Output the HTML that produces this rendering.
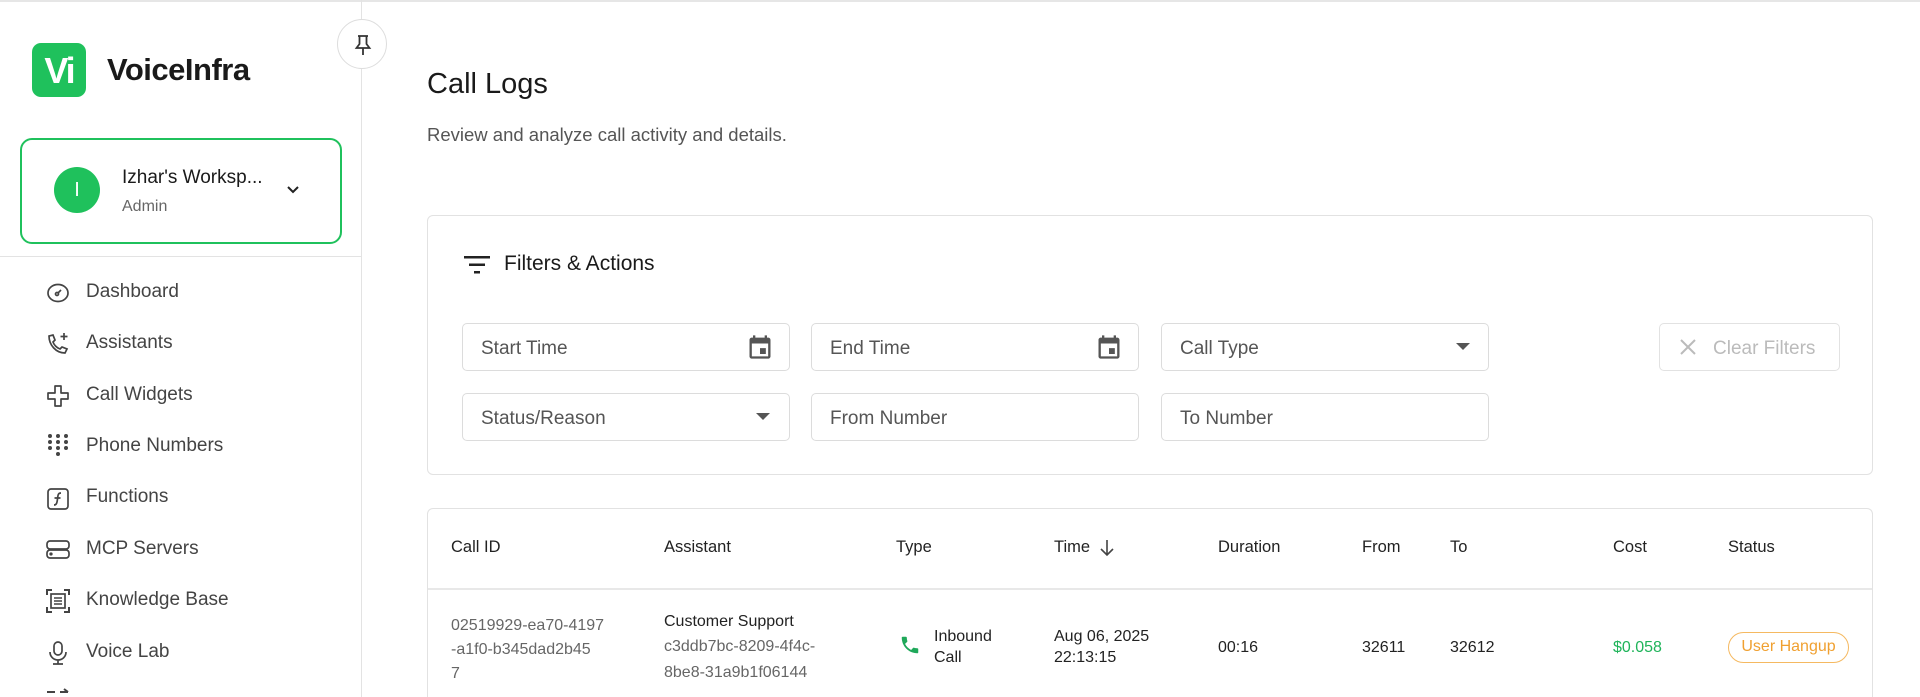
<!DOCTYPE html>
<html><head><meta charset="utf-8"><style>
*{box-sizing:border-box;margin:0;padding:0}
html,body{width:1920px;height:697px;overflow:hidden}
body{background:#fff;font-family:"Liberation Sans",sans-serif;color:#1a1a1a;position:relative}
.a{position:absolute}
.topline{left:0;top:0;width:1920px;height:2px;background:#e6e6e6}
.side{left:0;top:0;width:362px;height:697px;border-right:1px solid #e3e3e3}
.logo{left:32px;top:43px;width:54px;height:54px;background:#1fc15c;border-radius:9px;color:#fff;font-weight:700;font-size:36px;text-align:center;line-height:56px;letter-spacing:-2px}
.brand{left:107px;top:52px;font-size:31px;font-weight:700;letter-spacing:-0.5px}
.pin{left:337px;top:19px;width:50px;height:50px;border:1px solid #ddd;border-radius:50%;background:#fff}
.ws{left:20px;top:138px;width:322px;height:106px;border:2.5px solid #1fc15c;border-radius:12px}
.av{left:54px;top:167px;width:46px;height:46px;border-radius:50%;background:#1fc15c;color:#fff;text-align:center;line-height:46px;font-size:20px}
.nav{left:86px;font-size:19px;color:#444}
.ic{left:44px;width:28px;height:28px}
.card{border:1.5px solid #e2e2e2;border-radius:6px;background:#fff}
.inp{height:48px;border:1.5px solid #dcdcdc;border-radius:5px;font-size:19px;color:#555;padding:14px 18px}
.th{top:538px;font-size:16.5px;color:#222}
.td{font-size:16px;color:#333;line-height:24px}
</style></head><body>
<div class="a topline"></div>
<div class="a side"></div>
<div class="a logo">Vi</div>
<div class="a brand">VoiceInfra</div>
<div class="a pin"><svg width="50" height="50" viewBox="0 0 50 50" fill="none" stroke="#333" stroke-width="1.8"><path d="M20 16h10M21.5 16v8l-3 4h13l-3-4v-8M25 28v7"/></svg></div>
<div class="a ws"></div>
<div class="a av">I</div>
<div class="a" style="left:122px;top:167px;font-size:19px;font-weight:500">Izhar's Worksp...</div>
<div class="a" style="left:122px;top:198px;font-size:16px;color:#666">Admin</div>
<svg class="a" style="left:284px;top:183px" width="18" height="14" viewBox="0 0 18 14"><path d="M4 4l5 5 5-5" stroke="#222" stroke-width="2" fill="none"/></svg>
<div class="a" style="left:0;top:256px;width:362px;height:1px;background:#e3e3e3"></div>

<svg class="a ic" style="top:279px" viewBox="0 0 28 28" fill="none" stroke="#444" stroke-width="1.7"><ellipse cx="14" cy="14" rx="10" ry="8.5"/><circle cx="13" cy="15" r="1.5"/><path d="M14 14l3-3"/></svg>
<div class="a nav" style="top:281px">Dashboard</div>
<svg class="a ic" style="top:330px" viewBox="0 0 28 28" fill="none" stroke="#444" stroke-width="1.7"><path d="M5 6c0 9 7 17 16 17l2-4-5-2-2 2c-3-1-6-4-7-7l2-2-2-5z"/><path d="M20 3v7M16.5 6.5h7"/></svg>
<div class="a nav" style="top:332px">Assistants</div>
<svg class="a ic" style="top:382px" viewBox="0 0 28 28" fill="none" stroke="#444" stroke-width="1.7"><path d="M11 4h6v7h7v6h-7v7h-6v-7H4v-6h7z" stroke-linejoin="round"/></svg>
<div class="a nav" style="top:384px">Call Widgets</div>
<svg class="a ic" style="top:431px" viewBox="0 0 28 28" fill="#444"><circle cx="6" cy="5" r="2"/><circle cx="14" cy="5" r="2"/><circle cx="22" cy="5" r="2"/><circle cx="6" cy="11" r="2"/><circle cx="14" cy="11" r="2"/><circle cx="22" cy="11" r="2"/><circle cx="6" cy="17" r="2"/><circle cx="14" cy="17" r="2"/><circle cx="22" cy="17" r="2"/><circle cx="14" cy="23" r="2"/></svg>
<div class="a nav" style="top:435px">Phone Numbers</div>
<svg class="a ic" style="top:485px" viewBox="0 0 28 28" fill="none" stroke="#444" stroke-width="1.7"><rect x="4" y="4" width="20" height="20" rx="3"/><path d="M17 8c-3 0-3 2-3.5 6s-1 6-3.5 6M10.5 13h6"/></svg>
<div class="a nav" style="top:486px">Functions</div>
<svg class="a ic" style="top:536px" viewBox="0 0 28 28" fill="none" stroke="#444" stroke-width="1.7"><rect x="3" y="5" width="22" height="8" rx="3"/><rect x="3" y="14" width="22" height="8" rx="3"/><circle cx="7" cy="18" r=".8" fill="#444"/></svg>
<div class="a nav" style="top:538px">MCP Servers</div>
<svg class="a ic" style="top:587px" viewBox="0 0 28 28" fill="none" stroke="#444" stroke-width="2"><path d="M3 8V3h5M20 3h5v5M25 20v5h-5M8 25H3v-5"/><rect x="7" y="7" width="14" height="14" stroke-width="1.7"/><path d="M10 11h8M10 14h8M10 17h8" stroke-width="1.5"/></svg>
<div class="a nav" style="top:589px">Knowledge Base</div>
<svg class="a ic" style="top:639px" viewBox="0 0 28 28" fill="none" stroke="#444" stroke-width="1.7"><rect x="10" y="3" width="8" height="13" rx="4"/><path d="M6 13c0 5 4 8 8 8s8-3 8-8M14 21v4M9 25h10"/></svg>
<div class="a nav" style="top:641px">Voice Lab</div>
<svg class="a" style="left:44px;top:688px" width="28" height="9" viewBox="0 0 28 9" fill="none" stroke="#444" stroke-width="2"><path d="M3 4h8M16 4h8M20 1l4 3"/></svg>

<div class="a" style="left:427px;top:68px;font-size:29px;color:#1a1a1a">Call Logs</div>
<div class="a" style="left:427px;top:124px;font-size:18.5px;color:#555">Review and analyze call activity and details.</div>

<div class="a card" style="left:427px;top:215px;width:1446px;height:260px"></div>
<svg class="a" style="left:464px;top:254px" width="26" height="22" viewBox="0 0 26 22" fill="#222"><rect x="0" y="2" width="26" height="2.5"/><rect x="5" y="9.5" width="16" height="2.5"/><rect x="10" y="17" width="6" height="2.5"/></svg>
<div class="a" style="left:504px;top:252px;font-size:21px;font-weight:500">Filters &amp; Actions</div>

<div class="a inp" style="left:462px;top:323px;width:328px">Start Time</div>
<svg class="a" style="left:746px;top:333px" width="28" height="28" viewBox="0 0 24 24" fill="#555"><path d="M19 4h-1V2h-2v2H8V2H6v2H5c-1.1 0-2 .9-2 2v14c0 1.1.9 2 2 2h14c1.1 0 2-.9 2-2V6c0-1.1-.9-2-2-2zm0 16H5V9h14v11zM12 13h5v5h-5z"/></svg>
<div class="a inp" style="left:811px;top:323px;width:328px">End Time</div>
<svg class="a" style="left:1095px;top:333px" width="28" height="28" viewBox="0 0 24 24" fill="#555"><path d="M19 4h-1V2h-2v2H8V2H6v2H5c-1.1 0-2 .9-2 2v14c0 1.1.9 2 2 2h14c1.1 0 2-.9 2-2V6c0-1.1-.9-2-2-2zm0 16H5V9h14v11zM12 13h5v5h-5z"/></svg>
<div class="a inp" style="left:1161px;top:323px;width:328px">Call Type</div>
<svg class="a" style="left:1456px;top:343px" width="14" height="8"><path d="M0 0h14L7 7z" fill="#555"/></svg>
<div class="a inp" style="left:1659px;top:323px;width:181px;color:#bbb;border-color:#e2e2e2;padding-left:53px">Clear Filters</div>
<svg class="a" style="left:1679px;top:338px" width="18" height="18"><path d="M2 2l14 14M16 2L2 16" stroke="#bbb" stroke-width="2"/></svg>

<div class="a inp" style="left:462px;top:393px;width:328px">Status/Reason</div>
<svg class="a" style="left:756px;top:413px" width="14" height="8"><path d="M0 0h14L7 7z" fill="#555"/></svg>
<div class="a inp" style="left:811px;top:393px;width:328px">From Number</div>
<div class="a inp" style="left:1161px;top:393px;width:328px">To Number</div>

<div class="a card" style="left:427px;top:508px;width:1446px;height:189px;border-bottom:none;border-radius:6px 6px 0 0"></div>
<div class="a" style="left:428px;top:588px;width:1444px;height:2px;background:#e8e8e8"></div>
<div class="a th" style="left:451px">Call ID</div>
<div class="a th" style="left:664px">Assistant</div>
<div class="a th" style="left:896px">Type</div>
<div class="a th" style="left:1054px">Time</div>
<svg class="a" style="left:1099px;top:538px" width="16" height="20"><path d="M8 2v15M2 11l6 6 6-6" stroke="#444" stroke-width="1.6" fill="none"/></svg>
<div class="a th" style="left:1218px">Duration</div>
<div class="a th" style="left:1362px">From</div>
<div class="a th" style="left:1450px">To</div>
<div class="a th" style="left:1613px">Cost</div>
<div class="a th" style="left:1728px">Status</div>

<div class="a td" style="left:451px;top:614px;color:#666;width:175px">02519929-ea70-4197<br>-a1f0-b345dad2b45<br>7</div>
<div class="a td" style="left:664px;top:610px;color:#222">Customer Support</div>
<div class="a td" style="left:664px;top:634px;color:#666;line-height:26px">c3ddb7bc-8209-4f4c-<br>8be8-31a9b1f06144</div>
<svg class="a" style="left:899px;top:634px" width="22" height="22" viewBox="0 0 24 24" fill="#1fa85a"><path d="M6.6 10.8c1.4 2.8 3.8 5.1 6.6 6.6l2.2-2.2c.3-.3.7-.4 1-.2 1.1.4 2.3.6 3.6.6.6 0 1 .4 1 1V20c0 .6-.4 1-1 1C10.6 21 3 13.4 3 4c0-.6.4-1 1-1h3.5c.6 0 1 .4 1 1 0 1.3.2 2.5.6 3.6.1.3 0 .7-.2 1z"/></svg>
<div class="a td" style="left:934px;top:626px;color:#222;line-height:21px">Inbound<br>Call</div>
<div class="a td" style="left:1054px;top:626px;color:#222;line-height:21px">Aug 06, 2025<br>22:13:15</div>
<div class="a td" style="left:1218px;top:636px;color:#222">00:16</div>
<div class="a td" style="left:1362px;top:636px;color:#222">32611</div>
<div class="a td" style="left:1450px;top:636px;color:#222">32612</div>
<div class="a td" style="left:1613px;top:636px;color:#1fb45a">$0.058</div>
<div class="a" style="left:1728px;top:632px;width:121px;height:31px;border:1.5px solid #f5b961;border-radius:16px;color:#f0a030;font-size:16px;text-align:center;line-height:28px">User Hangup</div>
</body></html>
